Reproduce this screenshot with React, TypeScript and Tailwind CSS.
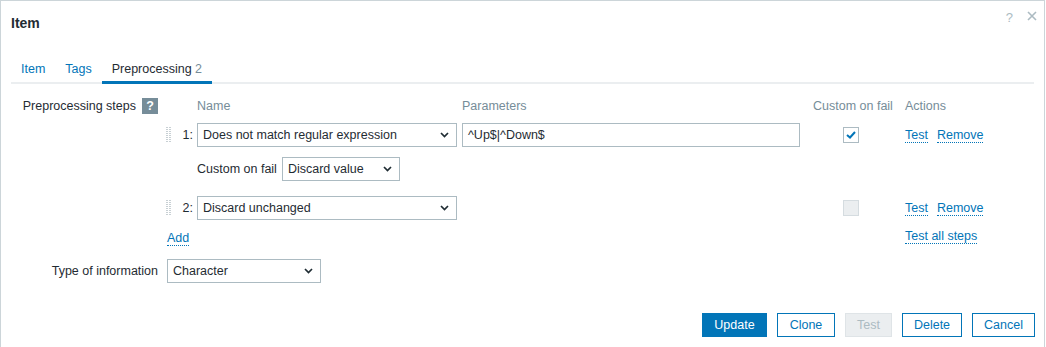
import React from 'react';

const font = { fontFamily: '"Liberation Sans", Arial, sans-serif' };

function Chevron() {
  return (
    <svg width="9" height="6" viewBox="0 0 9 6" className="shrink-0">
      <path d="M1 1l3.5 3.5L8 1" fill="none" stroke="#1f2c33" strokeWidth="1.7" />
    </svg>
  );
}

function Select({ value, width }: { value: string; width: string }) {
  return (
    <div
      className={`${width} h-[24px] flex items-center justify-between pl-[5px] pr-[7px] border border-[#acbbc2] bg-white text-[#1f2c33]`}
    >
      <span>{value}</span>
      <Chevron />
    </div>
  );
}

function DragHandle() {
  const dots = [];
  for (let r = 0; r < 8; r++) {
    dots.push(<rect key={`a${r}`} x="0" y={r * 2} width="2" height="1" fill="#c8d0d4" />);
    dots.push(<rect key={`b${r}`} x="3" y={r * 2} width="2" height="1" fill="#c8d0d4" />);
  }
  return (
    <svg width="5" height="16" viewBox="0 0 5 16">
      {dots}
    </svg>
  );
}

function Link({ children }: { children: React.ReactNode }) {
  return (
    <span className="text-[#0275b8] border-b border-dotted border-[#0275b8] leading-[14px] cursor-pointer">
      {children}
    </span>
  );
}

function Checkbox({ checked, disabled }: { checked?: boolean; disabled?: boolean }) {
  return (
    <div
      className={
        disabled
          ? 'w-[16px] h-[16px] border border-[#d5dce0] bg-[#ebeef0]'
          : 'w-[16px] h-[16px] border border-[#acbbc2] bg-white flex items-center justify-center'
      }
    >
      {checked && (
        <svg width="10" height="8" viewBox="0 0 10 8">
          <path d="M1 4l3 2.5L9 1" fill="none" stroke="#0275b8" strokeWidth="2" />
        </svg>
      )}
    </div>
  );
}

function StepRow({ n, name, params, checked }: { n: number; name: string; params?: string; checked?: boolean }) {
  return (
    <div className="flex items-center h-[24px]">
      <div className="w-[31px] flex items-center justify-between pr-[4px]">
        <DragHandle />
        <span>{n}:</span>
      </div>
      <Select value={name} width="w-[260px]" />
      <div className="w-[338px] ml-[5px]">
        {params !== undefined && (
          <div className="h-[24px] flex items-center px-[5px] border border-[#acbbc2] bg-white">{params}</div>
        )}
      </div>
      <div className="w-[105px] pl-[43px]">
        <Checkbox checked={checked} disabled={!checked} />
      </div>
      <div className="flex items-center gap-[9px]">
        <Link>Test</Link>
        <Link>Remove</Link>
      </div>
    </div>
  );
}

export default function App() {
  return (
    <div style={font} className="w-[1046px] h-[347px] bg-white text-[12.5px] text-[#1f2c33] overflow-hidden">
      <div className="w-[1045px] h-[360px] border border-[#ccd5d9]">
        {/* Header */}
        <div className="h-[53px] pt-[14px] pl-[10px] pr-[7px] flex justify-between">
          <h4 className="text-[14px] leading-[16px] font-bold">Item</h4>
          <div className="flex items-start gap-[14px] text-[#acbbc2] -mt-[5px]">
            <span className="text-[13px] leading-[16px]">?</span>
            <svg width="10" height="10" viewBox="0 0 10 10" className="mt-[1px]">
              <path d="M1 1l8 8M9 1l-8 8" stroke="#acbbc2" strokeWidth="1.6" />
            </svg>
          </div>
        </div>

        {/* Tabs */}
        <ul className="mx-[10px] flex border-b-2 border-[#ebeef0]">
          <li className="px-[10px] pt-[8px] pb-[6px] leading-[14px] text-[#0275b8]">Item</li>
          <li className="px-[10px] pt-[8px] pb-[6px] leading-[14px] text-[#0275b8]">Tags</li>
          <li className="px-[10px] pt-[8px] pb-[3px] -mb-[2px] leading-[14px] border-b-[3px] border-[#0275b8]">
            Preprocessing <span className="text-[#768d99]">2</span>
          </li>
        </ul>

        {/* Form */}
        <div className="mt-[14px]">
          <div className="flex">
            <div className="w-[157px] h-[16px] flex items-center justify-end gap-[6px]">
              <span>Preprocessing steps</span>
              <span className="w-[16px] h-[16px] bg-[#768d99] text-white font-bold flex items-center justify-center">?</span>
            </div>
            <div className="ml-[8px] flex flex-col">
              <div className="flex items-center h-[16px] text-[#768d99]">
                <div className="w-[31px]" />
                <div className="w-[260px]">Name</div>
                <div className="w-[338px] ml-[5px]">Parameters</div>
                <div className="w-[105px] pl-[13px]">Custom on fail</div>
                <div>Actions</div>
              </div>
              <div className="mt-[9px]">
                <StepRow n={1} name="Does not match regular expression" params="^Up$|^Down$" checked />
              </div>
              <div className="mt-[10px] flex items-center h-[24px] pl-[31px] gap-[5px]">
                <span>Custom on fail</span>
                <Select value="Discard value" width="w-[118px]" />
              </div>
              <div className="mt-[15px]">
                <StepRow n={2} name="Discard unchanged" />
              </div>
              <div className="mt-[9px] h-[15px] flex items-start">
                <div className="w-[739px] pl-[1px]">
                  <Link>Add</Link>
                </div>
                <Link>Test all steps</Link>
              </div>
            </div>
          </div>

          <div className="flex items-center mt-[15px]">
            <div className="w-[157px] text-right">Type of information</div>
            <div className="ml-[9px]">
              <Select value="Character" width="w-[154px]" />
            </div>
          </div>
        </div>

        {/* Footer */}
        <div className="mt-[30px] pr-[9px] flex justify-end gap-[10px]">
          <button className="h-[24px] w-[65px] bg-[#0275b8] text-white border border-[#0275b8]">Update</button>
          <button className="h-[24px] w-[58px] bg-white text-[#0275b8] border border-[#0275b8]">Clone</button>
          <button className="h-[24px] w-[47px] bg-[#ebeef0] text-[#acbbc2] border border-[#dfe4e7]">Test</button>
          <button className="h-[24px] w-[60px] bg-white text-[#0275b8] border border-[#0275b8]">Delete</button>
          <button className="h-[24px] w-[63px] bg-white text-[#0275b8] border border-[#0275b8]">Cancel</button>
        </div>
      </div>
    </div>
  );
}
